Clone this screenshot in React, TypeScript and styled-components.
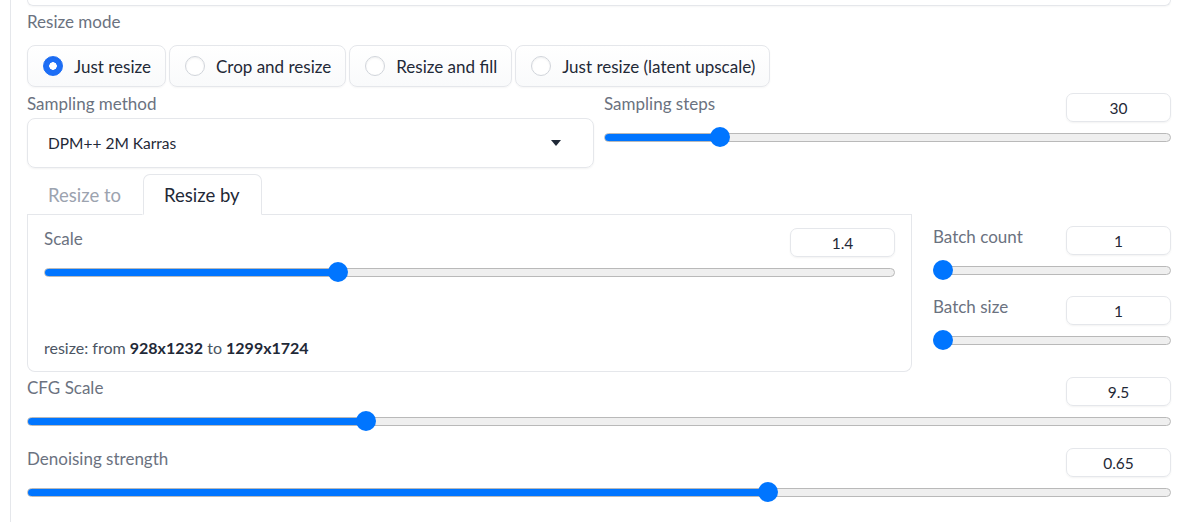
import styled, { createGlobalStyle } from "styled-components";

const GlobalStyle = createGlobalStyle`
  body {
    margin: 0;
    background: #ffffff;
    font-family: "Lato", "Liberation Sans", sans-serif;
    color: #1f2937;
  }
  #root {
    height: 522px;
    overflow: hidden;
  }
`;

interface SliderProps {
  min: number;
  max: number;
  value: number;
}

function Slider({ min, max, value }: SliderProps) {
  const frac = (value - min) / (max - min);
  const left = `calc(${frac} * (100% - 20px))`;
  return (
    <SliderArea>
      <Track>
        <Fill style={{ width: `calc(${frac} * (100% - 20px) + 10px)` }} />
      </Track>
      <Thumb style={{ left }} />
    </SliderArea>
  );
}

interface SliderFieldProps extends SliderProps {
  label: string;
}

function SliderField({ label, min, max, value }: SliderFieldProps) {
  return (
    <Field>
      <FieldHead>
        <Label>{label}</Label>
        <NumberBox>{value}</NumberBox>
      </FieldHead>
      <Slider min={min} max={max} value={value} />
    </Field>
  );
}

const modes = ["Just resize", "Crop and resize", "Resize and fill", "Just resize (latent upscale)"];

export default function App() {
  return (
    <>
      <GlobalStyle />
      <Page>
        <Panel>
          <TopBox />
          <Label $top={6}>Resize mode</Label>
          <RadioRow>
            {modes.map((m, i) => (
              <RadioOption key={m}>
                <RadioDot $checked={i === 0} />
                {m}
              </RadioOption>
            ))}
          </RadioRow>

          <SplitRow>
            <Column>
              <Label $top={1}>Sampling method</Label>
              <Dropdown>
                DPM++ 2M Karras
                <svg width="10" height="6" viewBox="0 0 10 6">
                  <path d="M0 0 L10 0 L5 6 Z" fill="#1f2937" />
                </svg>
              </Dropdown>
            </Column>
            <Column>
              <SliderField label="Sampling steps" min={1} max={150} value={30} />
            </Column>
          </SplitRow>

          <ResizeRow>
            <TabsColumn>
              <TabBar>
                <Tab>Resize to</Tab>
                <Tab $active>Resize by</Tab>
                <TabLine />
              </TabBar>
              <TabPanel>
                <SliderField label="Scale" min={0.05} max={4} value={1.4} />
                <Info>
                  resize: from <b>928x1232</b> to <b>1299x1724</b>
                </Info>
              </TabPanel>
            </TabsColumn>
            <BatchColumn>
              <SliderField label="Batch count" min={1} max={100} value={1} />
              <SliderField label="Batch size" min={1} max={8} value={1} />
            </BatchColumn>
          </ResizeRow>

          <Stack>
            <SliderField label="CFG Scale" min={1} max={30} value={9.5} />
            <SliderField label="Denoising strength" min={0} max={1} value={0.65} />
            <Label>Seed</Label>
          </Stack>
        </Panel>
      </Page>
    </>
  );
}

const Page = styled.div`
  padding-left: 10px;
  height: 100%;
`;

const Panel = styled.div`
  border-left: 1px solid #e5e7eb;
  padding: 0 29px 0 16px;
  height: 100%;
  display: flex;
  flex-direction: column;
  & > * {
    flex-shrink: 0;
  }
`;

const TopBox = styled.div`
  height: 5px;
  border: 1px solid #e5e7eb;
  border-top: none;
  border-radius: 0 0 8px 8px;
  box-shadow: 0 1px 2px rgba(0, 0, 0, 0.04);
`;

const Label = styled.div<{ $top?: number }>`
  font-size: 17px;
  line-height: 20px;
  color: #6b7280;
  margin-top: ${(p) => p.$top ?? 0}px;
`;

const RadioRow = styled.div`
  display: flex;
  gap: 3px;
  margin-top: 13px;
`;

const RadioOption = styled.label`
  display: flex;
  align-items: center;
  gap: 11px;
  height: 42px;
  box-sizing: border-box;
  padding: 0 14px 0 15px;
  border: 1px solid #e5e7eb;
  border-radius: 8px;
  background: linear-gradient(#ffffff, #f9fafb);
  box-shadow: 0 1px 2px rgba(0, 0, 0, 0.04);
  font-size: 17px;
  color: #1f2937;
`;

const RadioDot = styled.span<{ $checked?: boolean }>`
  width: 20px;
  height: 20px;
  box-sizing: border-box;
  border-radius: 50%;
  flex: none;
  border: 1px solid ${(p) => (p.$checked ? "#1d6ef6" : "#d1d5db")};
  background: ${(p) =>
    p.$checked ? "radial-gradient(circle, #ffffff 0 3.5px, #1d6ef6 4px)" : "#ffffff"};
  box-shadow: inset 0 1px 2px rgba(0, 0, 0, 0.06);
`;

const SplitRow = styled.div`
  display: grid;
  grid-template-columns: 1fr 1fr;
  gap: 10px;
  margin-top: 6px;
`;

const Column = styled.div`
  display: flex;
  flex-direction: column;
`;

const Dropdown = styled.div`
  margin-top: 4px;
  height: 50px;
  box-sizing: border-box;
  border: 1px solid #e5e7eb;
  border-radius: 8px;
  box-shadow: 0 1px 2px rgba(0, 0, 0, 0.05);
  display: flex;
  align-items: center;
  justify-content: space-between;
  padding: 0 32px 0 20px;
  font-size: 15.5px;
  color: #1f2937;
`;

const Field = styled.div`
  display: flex;
  flex-direction: column;
`;

const FieldHead = styled.div`
  display: flex;
  justify-content: space-between;
  align-items: flex-start;
  ${Label} {
    margin-top: 1px;
  }
`;

const NumberBox = styled.div`
  width: 105px;
  height: 29px;
  box-sizing: border-box;
  border: 1px solid #e5e7eb;
  border-radius: 7px;
  box-shadow: 0 1px 2px rgba(0, 0, 0, 0.05);
  display: flex;
  align-items: center;
  justify-content: center;
  font-size: 15.5px;
  color: #1f2937;
`;

const SliderArea = styled.div`
  position: relative;
  height: 30px;
  display: flex;
  align-items: center;
`;

const Track = styled.div`
  position: relative;
  width: 100%;
  height: 9px;
  box-sizing: border-box;
  border: 1px solid #b9b9b9;
  border-radius: 5px;
  background: #efefef;
  overflow: hidden;
`;

const Fill = styled.div`
  position: absolute;
  left: -1px;
  top: -1px;
  bottom: -1px;
  background: #0075ff;
  border-radius: 5px 0 0 5px;
`;

const Thumb = styled.div`
  position: absolute;
  top: 5px;
  width: 20px;
  height: 20px;
  border-radius: 50%;
  background: #0075ff;
`;

const ResizeRow = styled.div`
  display: grid;
  grid-template-columns: 885px 1fr;
  gap: 21px;
  margin-top: 6px;
`;

const TabsColumn = styled.div`
  display: flex;
  flex-direction: column;
`;

const TabBar = styled.div`
  display: flex;
  height: 40px;
`;

const Tab = styled.div<{ $active?: boolean }>`
  display: flex;
  align-items: center;
  padding: 0 21px 0 20px;
  font-size: 18.5px;
  color: ${(p) => (p.$active ? "#1f2937" : "#9ca3af")};
  border: 1px solid ${(p) => (p.$active ? "#e5e7eb" : "transparent")};
  border-bottom: 1px solid ${(p) => (p.$active ? "#ffffff" : "#e5e7eb")};
  border-radius: 7px 7px 0 0;
  margin-bottom: -1px;
  background: #ffffff;
`;

const TabLine = styled.div`
  flex: 1;
  border-bottom: 1px solid #e5e7eb;
  margin-bottom: -1px;
`;

const TabPanel = styled.div`
  height: 158px;
  box-sizing: border-box;
  border: 1px solid #e5e7eb;
  border-top: none;
  border-radius: 0 0 8px 8px;
  padding: 14px 16px 0;
  display: flex;
  flex-direction: column;
`;

const Info = styled.div`
  margin-top: 51px;
  font-size: 16px;
  line-height: 20px;
  color: #4b5563;
  b {
    color: #1f2937;
  }
`;

const BatchColumn = styled.div`
  display: flex;
  flex-direction: column;
  gap: 11px;
  padding-top: 52px;
`;

const Stack = styled.div`
  display: flex;
  flex-direction: column;
  gap: 12px;
  margin-top: 5px;
`;
